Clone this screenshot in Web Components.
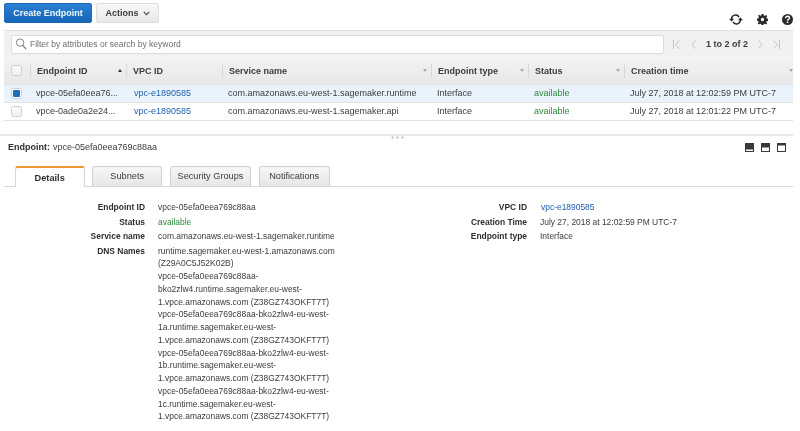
<!DOCTYPE html>
<html><head><meta charset="utf-8"><style>
html,body{margin:0;padding:0;background:#fff}
body{width:800px;height:431px;overflow:hidden;font-family:"Liberation Sans",Arial,sans-serif;font-size:9px;color:#3c3c3c}
aws-page{display:block;filter:blur(.25px)}
</style></head><body>
<aws-page>
  <aws-toolbar>
    <aws-button slot="left" variant="primary">Create Endpoint</aws-button>
    <aws-button slot="left" caret>Actions</aws-button>
    <aws-icon slot="right" name="refresh"></aws-icon>
    <aws-icon slot="right" name="gear"></aws-icon>
    <aws-icon slot="right" name="help"></aws-icon>
  </aws-toolbar>
  <aws-filter placeholder="Filter by attributes or search by keyword" range="1 to 2 of 2"></aws-filter>
  <aws-table id="t"></aws-table>
  <aws-splitter></aws-splitter>
  <aws-detail-head>
    <b slot="label">Endpoint:</b><span slot="value">vpce-05efa0eea769c88aa</span>
  </aws-detail-head>
  <aws-tabs active="0" tabs="Details|Subnets|Security Groups|Notifications"></aws-tabs>
  <aws-details></aws-details>
</aws-page>
<script>
const ICONS={
 refresh:'<svg width="14" height="11" viewBox="0 0 14 11"><g fill="none" stroke="#222" stroke-width="1.4"><path d="M2.600 5.200A4 4 0 0 1 10.100 3.100"/><path d="M11.400 5.800A4 4 0 0 1 3.900 7.900"/></g><path d="M0 4.700h5L2.600 7.500zM14 6.300H9L11.400 3.500z" fill="#222"/></svg>',
 gear:'<svg width="11" height="11" viewBox="0 0 12 12"><path fill="#2b2b2b" fill-rule="evenodd" d="M4.900 0h2.200l.3 1.700 1.200.5L10.100 1.200l1.100 1.100-1 1.500.5 1.200 1.600.3v2.200l-1.700.3-.5 1.200 1 1.400-1.100 1.100-1.500-1-1.200.5-.3 1.700H4.900l-.3-1.700-1.200-.5-1.500 1-1.100-1.100 1-1.400-.5-1.200L0 7.100V4.900l1.600-.3.5-1.200-1-1.400 1.100-1.100 1.500 1 1.200-.5zM6 4.200a1.800 1.800 0 1 0 0 3.600 1.800 1.800 0 0 0 0-3.600z"/></svg>',
 help:'<svg width="11" height="11" viewBox="0 0 12 12"><circle cx="6" cy="6" r="6" fill="#2b2b2b"/><path d="M3.900 4.500C3.900 3.200 4.900 2.500 6 2.500c1.200 0 2.100.7 2.100 1.800 0 1.600-2.100 1.500-2.100 3" fill="none" stroke="#fff" stroke-width="1.500"/><rect x="5.200" y="8.200" width="1.600" height="1.600" fill="#fff"/></svg>'
};
function def(name,css,html,init){
  customElements.define(name,class extends HTMLElement{
    constructor(){super();this.attachShadow({mode:'open'});}
    connectedCallback(){
      this.shadowRoot.innerHTML='<style>'+css+'</style>'+(typeof html==='function'?html(this):html);
      if(init)init(this);
    }
  });
}
def('aws-toolbar',
 ':host{display:flex;justify-content:space-between;padding:3px 7px 0 4px;height:30px;box-sizing:border-box}.g{display:flex;gap:4px;align-items:flex-start}.r{display:flex;gap:14px;align-items:center;padding-top:11px;height:11px}',
 '<div class="g"><slot name="left"></slot></div><div class="r"><slot name="right"></slot></div>');
def('aws-button',
 ':host{display:inline-flex;align-items:center;justify-content:center;height:20px;box-sizing:border-box;border-radius:2px;font-weight:700;font-size:9px;gap:4px;width:63px;background:linear-gradient(#f7f7f7,#e8e8e8);border:1px solid #ddd;color:#3c3c3c}:host([variant=primary]){background:linear-gradient(#2a80d2,#1566b7);border-color:#1b6bb8;color:#f2f7fc;width:88px}svg{display:block}',
 h=>'<slot></slot>'+(h.hasAttribute('caret')?'<svg width="7" height="5" viewBox="0 0 7 5"><path d="M.8 1l2.700 2.600L6.200 1" fill="none" stroke="#555" stroke-width="1.200"/></svg>':''));
def('aws-icon',':host{display:inline-flex;align-items:center;line-height:0}',h=>ICONS[h.getAttribute('name')]);
def('aws-filter',
 ':host{display:flex;align-items:center;margin:0 7px 0 4px;height:27px;box-sizing:border-box;border-top:1px solid #dedede;background:#f1f1f1;padding:0 0 0 7px}.in{width:653px;height:19px;box-sizing:border-box;background:#fff;border:1px solid #dcdcdc;border-radius:2px;display:flex;align-items:center;gap:3px;padding-left:3px;color:#6e6e6e;font-size:8.5px}.p{display:flex;align-items:center;margin-left:9px;color:#3c3c3c;font-weight:700;font-size:9px}svg{display:block}.t{margin:0 10px 0 10px}.s{margin-right:11px}.e{margin-left:10px}',
 h=>`<div class="in"><svg width="12" height="12" viewBox="0 0 12 13"><circle cx="5" cy="5" r="4" fill="none" stroke="#777" stroke-width="1"/><path d="M8 8l3.500 4" stroke="#777" stroke-width="1.300"/></svg><span>${h.getAttribute('placeholder')}</span></div>
 <div class="p"><svg class="s" width="7" height="9" viewBox="0 0 7 9"><path d="M.5 0v9M6.500.5L2.500 4.500l4 4" fill="none" stroke="#c2c2c2"/></svg><svg width="5" height="9" viewBox="0 0 5 9"><path d="M4.500.5L.8 4.500l3.700 4" fill="none" stroke="#c2c2c2"/></svg><span class="t">${h.getAttribute('range')}</span><svg width="5" height="9" viewBox="0 0 5 9"><path d="M.5.5l3.700 4-3.700 4" fill="none" stroke="#c2c2c2"/></svg><svg class="e" width="7" height="9" viewBox="0 0 7 9"><path d="M6.500 0v9M.5.5l4 4-4 4" fill="none" stroke="#c2c2c2"/></svg></div>`);
const COLS='26px 96px 96px 209px 97px 96px 169px';
def('aws-table',':host{display:block;margin:0 7px 0 4px}',
 `<aws-thead></aws-thead>
  <aws-row selected><aws-check checked></aws-check><span>vpce-05efa0eea76...</span><a>vpc-e1890585</a><span>com.amazonaws.eu-west-1.sagemaker.runtime</span><span>Interface</span><i>available</i><span>July 27, 2018 at 12:02:59 PM UTC-7</span></aws-row>
  <aws-row><aws-check></aws-check><span>vpce-0ade0a2e24...</span><a>vpc-e1890585</a><span>com.amazonaws.eu-west-1.sagemaker.api</span><span>Interface</span><i>available</i><span>July 27, 2018 at 12:01:22 PM UTC-7</span></aws-row>`);
def('aws-thead',
 `:host{display:grid;grid-template-columns:${COLS};height:28px;box-sizing:border-box;padding-bottom:1px;background:linear-gradient(#f3f3f3,#e7e7e7);font-weight:700;font-size:9px;color:#3c3c3c;align-items:center}
 .c{display:flex;align-items:center;justify-content:space-between;height:14px;padding:0 4.500px 0 6px;border-left:1px solid #d8d8d8;box-sizing:border-box}
 .c:last-child{padding-right:0}
 .k{padding-left:7px}
 .a{width:0;height:0;border-left:2.500px solid transparent;border-right:2.500px solid transparent;border-top:3px solid #aaa}
 .u{border-top:0;border-bottom:3px solid #333}`,
 ()=>'<div class="k"><aws-check></aws-check></div>'+[['Endpoint ID',1],['VPC ID',0],['Service name',1],['Endpoint type',1],['Status',1],['Creation time',1]].map(([t,a],i)=>`<div class="c"><span>${t}</span>${a?`<span class="a ${i==0?'u':''}"></span>`:''}</div>`).join(''));
def('aws-row',
 `:host{display:grid;grid-template-columns:${COLS};height:18px;box-sizing:border-box;padding-bottom:1px;border-bottom:1px solid #e2e2e2;align-items:center;background:#fff}
 :host([selected]){background:#eaf3fc}
 ::slotted(*){padding-left:6px;white-space:nowrap;overflow:hidden}
 ::slotted(aws-check){padding-left:0;margin-left:7px;overflow:visible}
 ::slotted(a){color:#1f5fb2;padding-left:8px}
 ::slotted(i){font-style:normal;color:#2b8a3e}`,
 '<slot></slot>');
def('aws-check',
 ':host{display:block;width:11px;height:11px;box-sizing:border-box;border:1px solid #cfcfcf;border-radius:2.500px;background:linear-gradient(#fbfbfb,#f0f0f0)}:host([checked]){background:#fff}:host([checked])::after{content:"";display:block;margin:1px;width:7px;height:7px;background:#1f6ec0;border-radius:1px}',
 '');
def('aws-splitter',
 ':host{display:block;margin:13px 7px 0 0;height:2px;background:#e8e8e8;position:relative}b{position:absolute;left:390px;top:2px;width:15px;height:3px;background:radial-gradient(circle,#ccc 1px,transparent 1.200px) 0 0/5px 3px}',
 '<b></b>');
def('aws-detail-head',
 ':host{display:flex;align-items:center;justify-content:space-between;height:22px;padding:0 14px 0 8px}::slotted(b){color:#2e2e2e;font-weight:700}svg{display:block}.i{display:flex;gap:7px}.l{display:flex;gap:3px}',
 `<div class="l"><slot name="label"></slot><slot name="value"></slot></div><div class="i">
 <svg width="9" height="9" viewBox="0 0 9 9"><rect width="9" height="9" fill="#3a3a3a"/><rect x="1" y="6.500" width="7" height="1.500" fill="#fff"/></svg>
 <svg width="9" height="9" viewBox="0 0 9 9"><rect width="9" height="9" fill="#3a3a3a"/><rect x="1" y="4.500" width="7" height="3.500" fill="#fff"/></svg>
 <svg width="9" height="9" viewBox="0 0 9 9"><rect width="9" height="9" fill="#3a3a3a"/><rect x="1" y="2.500" width="7" height="5.500" fill="#fff"/></svg></div>`);
def('aws-tabs',
 `:host{display:flex;align-items:flex-end;margin:8px 7px 0 4px;padding-left:10.700px;gap:7.500px;height:21px;box-sizing:border-box;border-bottom:1px solid #d6d6d6;font-size:9.2px}
 .t{height:20px;box-sizing:border-box;display:flex;align-items:center;justify-content:center;padding-bottom:2px;background:linear-gradient(#f7f7f7,#e6e6e6);border:1px solid #d0d0d0;border-bottom:0;border-radius:3px 3px 0 0;color:#3c3c3c}
 .on{height:21px;margin-bottom:-1px;padding-bottom:0;background:#fff;border-color:#d4d4d4;border-top:2px solid #ee9630;font-weight:700;color:#2e2e2e;padding-top:1px}`,
 h=>{const w=[70,70,81.5,71];return h.getAttribute('tabs').split('|').map((x,i)=>`<div class="t ${i==+h.getAttribute('active')?'on':''}" style="width:${w[i]}px">${x}</div>`).join('')});
def('aws-details',
 `:host{display:grid;grid-template-columns:403px 1fr;padding-top:13px;line-height:14.500px;font-size:8.450px}
 .g{display:grid;align-content:start;column-gap:13px;margin:0}
 .a{grid-template-columns:145px 178px}.b{grid-template-columns:124px 1fr}
 .k{font-weight:700;text-align:right;color:#2e2e2e;margin:0}
 .v{margin:0;white-space:nowrap}.ok{color:#2b8a3e}a{color:#1f5fb2}.d{line-height:12.750px;padding-top:1px}`,
 `<dl class="g a">
  <dt class="k">Endpoint ID</dt><dd class="v">vpce-05efa0eea769c88aa</dd>
  <dt class="k">Status</dt><dd class="v ok">available</dd>
  <dt class="k">Service name</dt><dd class="v">com.amazonaws.eu-west-1.sagemaker.runtime</dd>
  <dt class="k">DNS Names</dt><dd class="v d"><div>runtime.sagemaker.eu-west-1.amazonaws.com</div><div>(Z29A0C5J52K02B)</div><div>vpce-05efa0eea769c88aa-</div><div>bko2zlw4.runtime.sagemaker.eu-west-</div><div>1.vpce.amazonaws.com (Z38GZ743OKFT7T)</div><div>vpce-05efa0eea769c88aa-bko2zlw4-eu-west-</div><div>1a.runtime.sagemaker.eu-west-</div><div>1.vpce.amazonaws.com (Z38GZ743OKFT7T)</div><div>vpce-05efa0eea769c88aa-bko2zlw4-eu-west-</div><div>1b.runtime.sagemaker.eu-west-</div><div>1.vpce.amazonaws.com (Z38GZ743OKFT7T)</div><div>vpce-05efa0eea769c88aa-bko2zlw4-eu-west-</div><div>1c.runtime.sagemaker.eu-west-</div><div>1.vpce.amazonaws.com (Z38GZ743OKFT7T)</div></dd>
 </dl>
 <dl class="g b">
  <dt class="k">VPC ID</dt><dd class="v"><a style="margin-left:1px">vpc-e1890585</a></dd>
  <dt class="k">Creation Time</dt><dd class="v">July 27, 2018 at 12:02:59 PM UTC-7</dd>
  <dt class="k">Endpoint type</dt><dd class="v">Interface</dd>
 </dl>`);
</script>
</body></html>
